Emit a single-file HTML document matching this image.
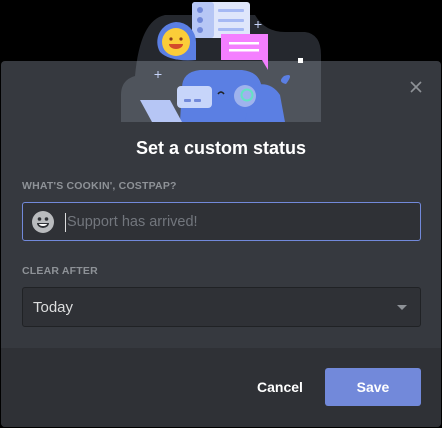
<!DOCTYPE html><html><head><style>
body{margin:0;width:442px;height:428px;background:#000;position:relative;overflow:hidden;font-family:"Liberation Sans",sans-serif}
.modal{position:absolute;left:1px;top:61px;width:440px;height:366px;background:#36393f;border-radius:4px;overflow:hidden}
.foot{position:absolute;left:0;top:287px;width:440px;height:79px;background:#2f3136}
.lbl{position:absolute;left:21px;font-size:10.5px;font-weight:bold;color:#8e9297;letter-spacing:.2px}
.box{position:absolute;left:21px;width:399px;height:38px;background:#2f3136;border:1px solid #202225;border-radius:3px;box-sizing:border-box}
</style></head><body>
<div class="modal">
<svg style="position:absolute;left:408px;top:19px" width="14" height="14"><path d="M2 2L12 12M12 2L2 12" stroke="#8e9297" stroke-width="1.6"/></svg>
<div style="position:absolute;top:77px;width:440px;text-align:center;color:#fff;font-size:18px;font-weight:bold">Set a custom status</div>
<div class="lbl" style="top:119px">WHAT'S COOKIN', COSTPAP?</div>
<div class="box" style="top:141px;height:39px;border-color:#7289da">
<svg style="position:absolute;left:9px;top:8px" width="22" height="22"><circle cx="11" cy="11" r="11" fill="#b9bbbe"/><circle cx="7.5" cy="8" r="1.8" fill="#2f3136"/><circle cx="14.5" cy="8" r="1.8" fill="#2f3136"/><path d="M5 12 h12 a6 5 0 0 1 -12 0z" fill="#2f3136"/><path d="M7 13 h8 a4 2 0 0 1 -8 0z" fill="#fff"/></svg>
<div style="position:absolute;left:42px;top:10px;width:1px;height:19px;background:#dcddde"></div>
<div style="position:absolute;left:44px;top:11px;font-size:14.5px;color:#72767d">Support has arrived!</div>
</div>
<div class="lbl" style="top:204px">CLEAR AFTER</div>
<div class="box" style="top:226px;height:40px">
<div style="position:absolute;left:10px;top:11px;font-size:15px;color:#dcddde">Today</div>
<div style="position:absolute;right:13px;top:17px;border:5px solid transparent;border-top-color:#8e9297;border-bottom:0"></div>
</div>
<div class="foot">
<div style="position:absolute;left:256px;top:31px;color:#fff;font-size:14px;font-weight:bold">Cancel</div>
<div style="position:absolute;left:324px;top:20px;width:96px;height:38px;background:#7289da;border-radius:3px;color:#fff;font-size:14px;font-weight:bold;text-align:center;line-height:38px">Save</div>
</div>
</div>
<svg style="position:absolute;left:0;top:0" width="442" height="130">
<defs><clipPath id="bd"><path d="M121 122 L121 95 Q121 80 135 76 Q140 20 165 15 L255 15 Q265 32 285 32 L305 32 Q321 34 321 55 L321 122 Z"/></clipPath></defs>
<g clip-path="url(#bd)"><rect x="0" y="0" width="442" height="61" fill="#25282e"/><rect x="0" y="61" width="442" height="70" fill="#4f545c"/></g>
<rect x="192" y="2" width="58" height="36" rx="3" fill="#dfe6fb"/>
<rect x="192" y="2" width="22" height="36" rx="3" fill="#b6c6f5"/>
<circle cx="200" cy="10" r="3" fill="#7289da"/><circle cx="200" cy="20" r="3" fill="#7289da"/><circle cx="200" cy="30" r="3" fill="#7289da"/>
<rect x="218" y="9" width="26" height="3" rx="1" fill="#a6b9f4"/><rect x="218" y="19" width="26" height="3" rx="1" fill="#a6b9f4"/><rect x="218" y="28" width="26" height="3" rx="1" fill="#a6b9f4"/>
<path d="M221 34 H268 V70 L262 60 H221 Z" fill="#f47fff"/>
<rect x="229" y="42" width="30" height="2.5" fill="#fff"/><rect x="229" y="49" width="30" height="2.5" fill="#fff"/>
<path d="M176 22 a20 20 0 0 1 20 20 V60 H196 Q170 62 160 52 A20 20 0 0 1 176 22Z" fill="#5b7fe3"/>
<circle cx="176" cy="42" r="14" fill="#fbcd39"/>
<circle cx="171" cy="39" r="1.6" fill="#8a3a1c"/><circle cx="181" cy="39" r="1.6" fill="#8a3a1c"/>
<path d="M169 44 h14 a7 5 0 0 1 -14 0z" fill="#d44a2a"/>
<path d="M182 88 Q182 72 200 70 H242 Q262 72 262 92 L266 122 H180 Z" fill="#5b7fe3"/>
<path d="M252 86 Q270 80 280 95 L285 122 H245 Z" fill="#5b7fe3"/>
<rect x="177" y="86" width="35" height="22" rx="4" fill="#c7d5fa"/>
<rect x="184" y="99" width="7" height="3" rx="1" fill="#7289da"/><rect x="194" y="99" width="7" height="3" rx="1" fill="#7289da"/>
<circle cx="245" cy="96" r="11" fill="#9fb3ed"/><circle cx="247" cy="95" r="6.5" fill="#64e3c4"/><circle cx="247" cy="95" r="4.5" fill="#9fb3ed"/>
<path d="M140 100 H170 L182 122 H152 Z" fill="#b6c6f5"/>
<path d="M218 94 q3 -4 6 0" stroke="#202225" stroke-width="1.5" fill="none"/>
<path d="M286 84 Q295 72 284 76 Q277 82 286 84Z" fill="#5b7fe3"/>
<rect x="298" y="58" width="5" height="5" fill="#fff"/>
<path d="M158 71 v7 M154.5 74.5 h7 M258 21 v7 M254.5 24.5 h7" stroke="#c7d5fa" stroke-width="1"/>
</svg>
</body></html>
